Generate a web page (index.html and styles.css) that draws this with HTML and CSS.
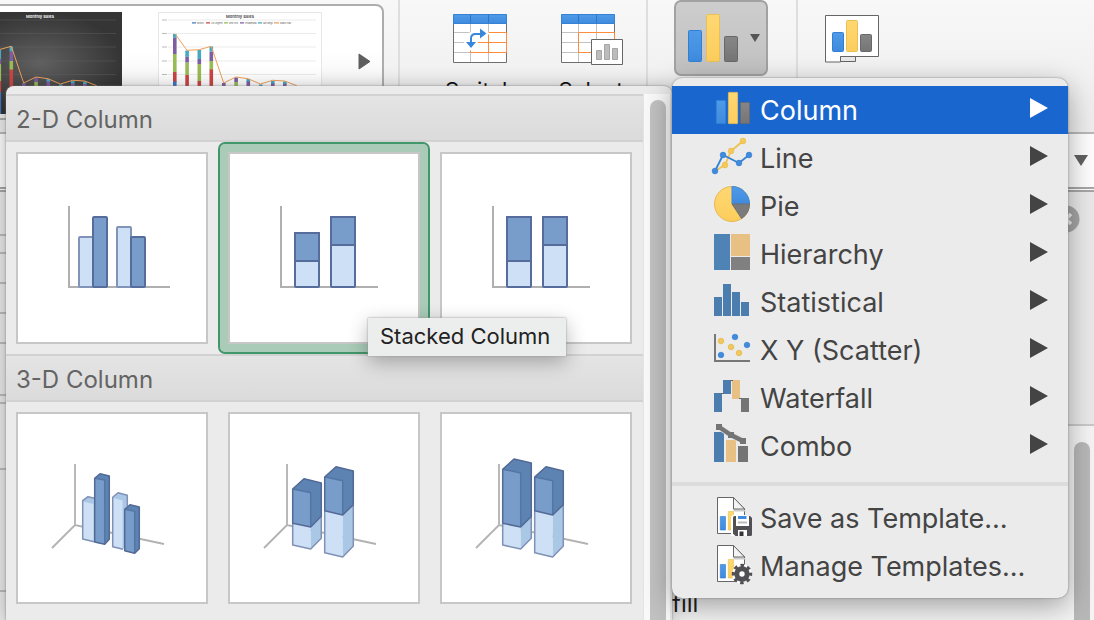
FILE: index.html
```html
<!DOCTYPE html>
<html lang="en">
<head>
<meta charset="utf-8">
<title>Change Chart Type</title>
<link rel="stylesheet" href="styles.css">
</head>
<body>
<svg class="defs" aria-hidden="true">
  <defs>
    <linearGradient id="blue" x1="0" y1="0" x2="0" y2="1"><stop offset="0" stop-color="#4f9be8"/><stop offset="1" stop-color="#3f8ade"/></linearGradient>
    <linearGradient id="gold" x1="0" y1="0" x2="0" y2="1"><stop offset="0" stop-color="#ffd772"/><stop offset="1" stop-color="#fccd5c"/></linearGradient>
    <linearGradient id="gray" x1="0" y1="0" x2="0" y2="1"><stop offset="0" stop-color="#868686"/><stop offset="1" stop-color="#757575"/></linearGradient>
    <radialGradient id="night"><stop offset="0" stop-color="#606060"/><stop offset="1" stop-color="#353535"/></radialGradient>
    <g id="plot">
      <g fill="#3f78c4"><path d="M15 69h3.600v33h-3.600zM27.300 85h3.600v17h-3.600zM39.500 80h3.600v22h-3.600zM51.500 82h3.600v20h-3.600z"/></g>
      <g fill="#cb4444"><path d="M15 60h3.600v9.500h-3.600zM27.300 63h3.600v22h-3.600zM39.500 69h3.600v11h-3.600zM51.500 57h3.600v25h-3.600z"/></g>
      <g fill="#98bb55"><path d="M15 42h3.600v18h-3.600zM27.300 50.500h3.600V63h-3.600zM39.500 52h3.600v17h-3.600zM51.500 49h3.600v8.500h-3.600zM76.300 70h3.600v10h-3.600z"/></g>
      <g fill="#7d5ea3"><path d="M15 25.500h3.600V42h-3.600zM27.300 44.500h3.600v6h-3.600zM39.500 47h3.600v5h-3.600zM51.500 39.500h3.600V49h-3.600zM64 71h3.600v9h-3.600zM76.300 65.500h3.600V70h-3.600zM88.500 69h3.600v9h-3.600zM113 71h3.600v5h-3.600zM125 71h3.600v5h-3.600z"/></g>
      <g fill="#45a9c6"><path d="M15 22h3.600v3.700h-3.600zM27.300 38.500h3.600v6.200h-3.600zM39.500 38h3.600v9h-3.600zM51.500 34.500h3.600v5h-3.600zM88.500 67h3.600v2.500h-3.600zM101 72.500h3.600v3h-3.600zM113 69h3.600v2.500h-3.600zM125 69.500h3.600V72h-3.600z"/></g>
      <path d="M17 21.700 29 38.300l12-.6 12.300-3.400L65.700 71 78 65l12 1.700 12.300 5.300 12.400-3.700 12 .7 12 4.700" fill="none" stroke="#f0a05a"/>
    </g>
    <g id="axis3d" fill="none" stroke="#b2b2b2" stroke-width="1.800"><path d="M59 52v61M36 136l23-23 89 19"/></g>
    <g id="tower-short">
      <path class="pale" d="M64.700 111.300v21.700l18 4V115z"/><path class="sky" d="M82.700 115v22l10.600-10.700v-22z"/>
      <path class="edge-soft" d="M64.700 111.300V133l18 4 10.600-10.700v-22"/>
      <path class="mid" d="M64.700 77v34.300l18 3.700V80.700z"/><path class="deep" d="M64.700 77 76 66.700 93.300 71v33.300L82.700 115V80.700z"/>
      <path class="ridge" d="m65 77 17.700 3.700V115"/><path class="edge" d="M64.700 77 76 66.700 93.300 71v33.300L82.700 115l-18-3.700z"/>
    </g>
    <g id="tower-tall">
      <path class="pale" d="M64.700 111.300v21.700l18 4V115z"/><path class="sky" d="M82.700 115v22l10.600-10.700v-22z"/>
      <path class="edge-soft" d="M64.700 111.300V133l18 4 10.600-10.700v-22"/>
      <path class="mid" d="M64.700 57.300v54l18 3.700V61z"/><path class="deep" d="M64.700 57.300 76 47l17.300 4v54L82.700 115V61z"/>
      <path class="ridge" d="M65 57.300 82.700 61v54"/><path class="edge" d="M64.700 57.300 76 47l17.300 4v53.500L82.700 115l-18-3.700z"/>
    </g>
    <g id="tower-back">
      <path class="pale" d="M96.700 98.700v42l18 4.300v-42z"/><path class="sky" d="M114.700 103v42l10.600-11V92.700z"/>
      <path class="edge-soft" d="M96.700 98.700v42l18 4.300 10.600-11V92.700"/>
      <path class="mid" d="M96.700 65v33.700l18 4.300V68.700z"/><path class="deep" d="M96.700 65 108 54.700l17.300 4.300v33.700L114.700 103V68.700z"/>
      <path class="ridge" d="m97 65 17.700 3.700V103"/><path class="edge" d="M96.700 65 108 54.700l17.300 4.300v33.700L114.700 103l-18-4.300z"/>
    </g>
    <g id="template-page">
      <path d="M5.500-.5h16L32.500 11v24.500h-27z" fill="#fff" stroke="#666"/>
      <path d="M21.500 11v2.500h12V12z" fill="#ccc"/>
      <path d="M21.500-.5V11h11z" fill="#f4f4f4" stroke="#666"/>
      <path d="M8.300 18.500h5.200V32H8.300z" fill="url(#blue)" stroke="#2e78cc" stroke-width=".6"/>
      <path d="M16.300 13.500h5.200V32h-5.200z" fill="url(#gold)" stroke="#e8bd4e" stroke-width=".6"/>
    </g>
  </defs>
</svg>

<div class="app">
  <header class="ribbon">
    <div class="gallery">
      <svg class="thumb" viewBox="0 0 164 102" role="img" aria-label="Dark chart style">
        <path d="M0 0h164v102H0z" fill="url(#night)"/>
        <path d="M10 8h148M10 21.500h148M10 35h148M10 49h148M10 62.500h148" stroke="#666" stroke-width=".4"/>
        <use href="#plot"/>
        <text x="82" y="6" class="chart-title light">Monthly Sales</text>
      </svg>
      <svg class="thumb" viewBox="0 0 164 102" role="img" aria-label="Light chart style">
        <path d="M.5.500h163v101H.5z" fill="#fff" stroke="#e6e6e6"/>
        <path d="M10 8h148M10 21.500h148M10 35h148M10 49h148M10 62.500h148" stroke="#ddd" stroke-width=".6"/>
        <path d="M4 8h5M4 21.500h5M4 35h5M4 49h5M4 62.500h5" stroke="#bbb"/>
        <use href="#plot"/>
        <g stroke-width="1.300"><path d="M34 10.800h4" stroke="#3f78c4"/><path d="M48 10.800h4" stroke="#cb4444"/><path d="M66 10.800h4" stroke="#98bb55"/><path d="M82 10.800h4" stroke="#7d5ea3"/><path d="M100 10.800h4" stroke="#45a9c6"/><path d="M116 10.800h5" stroke="#f0a05a"/></g>
        <g class="legend"><text x="39" y="11.500">Boston</text><text x="53" y="11.500">Los Angeles</text><text x="71" y="11.500">New York</text><text x="87" y="11.500">Philadelphia</text><text x="105" y="11.500">San Diego</text><text x="122" y="11.500">Grand Total</text></g>
        <text x="82" y="6" class="chart-title">Monthly Sales</text>
      </svg>
      <button class="gallery-next" aria-label="More styles"><svg viewBox="0 0 13 17" width="13" height="17"><path d="M1 1v15l11-7.500z" fill="#5e5e5e" stroke="#5e5e5e" stroke-linejoin="round"/></svg></button>
    </div>
    <div class="group data-group">
      <button class="tool">
        <svg viewBox="0 0 64 52" width="64" height="52">
          <path d="M5.500 9.500h53v39h-53z" fill="#fff" stroke="#707070"/>
          <path d="M22.500 10v38M40.500 10v38M6 18.500h52M6 28.500h52M6 38.500h52" stroke="#c2c2c2"/>
          <path d="M40.500 18.500h18v20h-36v-10h36M40.500 18.500v20" fill="none" stroke="#ff8c3c"/>
          <path d="M5.500.5h53v9h-53z" fill="url(#blue)" stroke="#3482d4"/><path d="M22.500 1v8M40.500 1v8" stroke="#2b76c7"/>
          <path d="M23 30v-5.500q0-4.500 4.500-4.500H33" fill="none" stroke="#fff" stroke-width="7"/><path d="m30 12 12 7.500L30 27zM15 27h16l-8 10z" fill="#fff"/>
          <path d="M23 29v-4.500q0-4.500 4.500-4.500H33" fill="none" stroke="#3987dc" stroke-width="2"/><path d="m32 14.500 6.500 5-6.500 5zM18 28h10l-5 6z" fill="#3987dc"/>
        </svg>
        <span>Switch</span>
      </button>
      <button class="tool">
        <svg viewBox="0 0 64 52" width="64" height="52">
          <path d="M2.500 9.500h53v39h-53z" fill="#fff" stroke="#707070"/>
          <path d="M19.500 10v38M37.500 10v38M3 18.500h52M3 28.500h52M3 38.500h52" stroke="#c2c2c2"/>
          <path d="M19.500 18.500h36v20h-36z" fill="none" stroke="#ff8c3c"/>
          <path d="M2.500.5h53v9h-53z" fill="url(#blue)" stroke="#3482d4"/><path d="M19.500 1v8M37.500 1v8" stroke="#2b76c7"/>
          <path d="M32.500 25.500h31v25h-31z" fill="#fff" stroke="#666"/><path d="M37.500 36.500h5v9h-5zM45.500 30.500h5v15h-5zM53.500 34.500h5v11h-5z" fill="#bcbcbc" stroke="#a6a6a6"/>
        </svg>
        <span>Select</span>
      </button>
    </div>
    <div class="group type-group">
      <button class="tool-pressed" aria-label="Change Chart Type" aria-expanded="true">
        <svg viewBox="0 0 50 50" width="50" height="50">
          <rect x=".5" y="17.500" width="13" height="31" rx="1" fill="url(#blue)" stroke="#3280d4"/>
          <rect x="18.500" y="1.500" width="13" height="47" rx="1" fill="url(#gold)" stroke="#e9c057"/>
          <rect x="36.500" y="23.500" width="13" height="25" rx="1" fill="url(#gray)" stroke="#686868"/>
        </svg>
        <svg viewBox="0 0 10 9" width="10" height="9"><path d="M0 0h10L5 8z" fill="#555"/></svg>
      </button>
    </div>
    <div class="group move-group">
      <button class="tool" aria-label="Move Chart">
        <svg viewBox="0 0 54 48" width="54" height="48">
          <path d="M.5.500h53v41h-38v5.500H.5z" fill="#fff" stroke="#666"/><path d="M15.500 41.500h15v5h-15z" fill="#e8e8e8" stroke="#666"/>
          <rect x="7.500" y="17.500" width="11" height="19" rx="1" fill="url(#blue)" stroke="#3280d4"/>
          <rect x="21.500" y="5.500" width="11" height="31" rx="1" fill="url(#gold)" stroke="#e9c057"/>
          <rect x="35.500" y="19.500" width="11" height="17" rx="1" fill="url(#gray)" stroke="#686868"/>
        </svg>
      </button>
    </div>
  </header>
  <div class="formula-bar"><button aria-label="Expand formula bar"><svg viewBox="0 0 14 12" width="14" height="12"><path d="M0 0h14L7 11z" fill="#606060"/></svg></button></div>
  <main class="workspace">
    <div class="rows"><i class="row tall"></i><i class="row slim"></i><i class="row"></i><i class="row"></i><i class="row"></i><i class="row big"></i><i class="row thin"></i><i class="row huge"></i><i class="row giant"></i></div>
    <aside class="pane">
      <div class="pane-head"><button aria-label="Close pane"><svg viewBox="0 0 28 28" width="28" height="28"><circle cx="14" cy="14" r="13.500" fill="#a5a5a5"/><path d="m9 9 10 10M19 9 9 19" stroke="#eee" stroke-width="3.500"/></svg></button></div>
      <div class="pane-body"><span class="pane-label">fill</span><i class="pane-thumb"></i></div>
    </aside>
  </main>
</div>

<section class="submenu" aria-label="Column charts">
  <div class="submenu-content">
    <h2>2-D Column</h2>
    <div class="tiles">
      <button class="tile" aria-label="Clustered Column"><svg viewBox="2 2 188 188">
        <path class="axis" d="M53 54v81h101"/>
        <g class="bar-soft"><rect class="pale" x="63" y="85" width="14" height="50" rx="1"/><rect class="pale" x="101" y="75" width="14" height="60" rx="1"/></g>
        <g class="bar"><rect class="mid" x="77" y="65" width="14" height="70" rx="1"/><rect class="mid" x="115" y="85" width="14" height="50" rx="1"/></g></svg></button>
      <button class="tile selected" aria-label="Stacked Column"><svg viewBox="2 2 188 188">
        <path class="axis" d="M53 54v81h97"/>
        <g class="bar"><rect class="pale" x="67" y="81" width="24" height="54" rx="1"/><path class="mid" d="M67 81h24v28H67z"/><rect class="pale" x="103" y="65" width="24" height="70" rx="1"/><path class="mid" d="M103 65h24v28h-24z"/></g></svg></button>
      <button class="tile" aria-label="100% Stacked Column"><svg viewBox="2 2 188 188">
        <path class="axis" d="M53 54v81h97"/>
        <g class="bar"><rect class="pale" x="67" y="65" width="24" height="70" rx="1"/><path class="mid" d="M67 65h24v44H67z"/><rect class="pale" x="103" y="65" width="24" height="70" rx="1"/><path class="mid" d="M103 65h24v28h-24z"/></g></svg></button>
    </div>
    <h2>3-D Column</h2>
    <div class="tiles">
      <button class="tile" aria-label="3-D Clustered Column"><svg viewBox="2 2 188 188">
        <use href="#axis3d"/>
        <path class="sky" d="M66.700 88.700 72 84.700l8.700 2v43l-3.400 0-10.600-2.700z"/><path class="pale" d="m67 89.500 10.500 2.500v37.700L67 127z"/><path class="edge-soft" d="M78 129.800 66.700 127V88.700l5.300-4 8.700 2"/>
        <path class="deep" d="M78.700 66.300 84 61.700l9.300 2.300v63.300l-4.600 5-10-2.300z"/><path class="mid" d="m78.700 66.300 10 1.700v64.300l-10-2.300z"/><path class="ridge" d="m79 66.300 9.700 1.700v64"/><path class="edge" d="M78.700 66.300 84 61.700l9.300 2.300v63.300l-4.600 5-10-2.300z"/>
        <path class="sky" d="m96.700 85.300 5.300-4.600 9.300 2.600v50l-4.600 4-10-2.600z"/><path class="pale" d="m97 86 9.500 2.500v48L97 134.700z"/><path class="edge-soft" d="M107 137.300 96.700 134.700V85.300l5.300-4.600 9.300 2.600V94"/>
        <path class="deep" d="m108.700 97.300 5.300-4.600 9.300 2.300v41.700l-4.600 4.600-10-2.600z"/><path class="mid" d="m108.700 97.300 10 2v42l-10-2.600z"/><path class="ridge" d="m109 97.300 9.700 2v42"/><path class="edge" d="m108.700 97.300 5.300-4.600 9.300 2.300v41.700l-4.600 4.600-10-2.600z"/></svg></button>
      <button class="tile" aria-label="3-D Stacked Column"><svg viewBox="2 2 188 188"><use href="#axis3d"/><use href="#tower-short"/><use href="#tower-back"/></svg></button>
      <button class="tile" aria-label="3-D 100% Stacked Column"><svg viewBox="2 2 188 188"><use href="#axis3d"/><use href="#tower-tall" x="-2"/><use href="#tower-back" x="-2"/></svg></button>
    </div>
  </div>
  <div class="track"><i class="scroll-thumb"></i></div>
</section>

<div class="tooltip" role="tooltip">Stacked Column</div>

<nav class="menu" aria-label="Chart types">
  <button class="item active"><svg class="icon" viewBox="0 0 40 40"><g stroke-width=".8"><rect x="4.400" y="10.400" width="9.200" height="23.200" rx=".5" fill="url(#blue)" stroke="#3482d4"/><rect x="16.400" y="2.400" width="9.200" height="31.200" rx=".5" fill="url(#gold)" stroke="#e9c057"/><rect x="28.400" y="12.400" width="9.200" height="21.200" rx=".5" fill="url(#gray)" stroke="#686868"/></g></svg><span>Column</span><i class="arrow"></i></button>
  <button class="item"><svg class="icon" viewBox="0 0 40 40"><path d="m3 33 10-6 6-14L31 3" fill="none" stroke="#f2c14e" stroke-width="1.800"/><g fill="#f5c957" stroke="#e2b444" stroke-width=".5"><circle cx="13" cy="27" r="2.900"/><circle cx="19" cy="13" r="2.900"/><circle cx="31" cy="3" r="2.900"/></g><path d="m3 33 8-16 16 8 10-8" fill="none" stroke="#3482d4" stroke-width="1.800"/><g fill="#3f8cde" stroke="#2e78cc" stroke-width=".5"><circle cx="3" cy="33" r="2.900"/><circle cx="11" cy="17" r="2.900"/><circle cx="27" cy="25" r="2.900"/><circle cx="37" cy="17" r="2.900"/></g></svg><span>Line</span><i class="arrow"></i></button>
  <button class="item"><svg class="icon" viewBox="0 0 40 40"><circle cx="20" cy="18" r="17.500" fill="url(#gold)" stroke="#e5b94e"/><path d="M20 18V.5A17.500 17.500 0 0 1 37.500 18z" fill="url(#blue)" stroke="#3b89df"/><path d="M20 18h17.500a17.500 17.500 0 0 1-8 14.500z" fill="#7b7b7b" stroke="#707070"/></svg><span>Pie</span><i class="arrow"></i></button>
  <button class="item"><svg class="icon" viewBox="0 0 40 40"><path d="M2 0h16v36H2z" fill="#4f82b5"/><path d="M19 0h19v22H19z" fill="#e9c084"/><path d="M19 23h19v13H19z" fill="#808080"/></svg><span>Hierarchy</span><i class="arrow"></i></button>
  <button class="item"><svg class="icon" viewBox="0 0 40 40"><path d="M2 15h8v19H2zM11 2h8v32h-8zM20 10h8v24h-8zM29 20h8v14h-8z" fill="#4b7daf"/></svg><span>Statistical</span><i class="arrow"></i></button>
  <button class="item"><svg class="icon" viewBox="0 0 40 40"><path d="M3 4v27h35" fill="none" stroke="#777" stroke-width="2"/><g fill="#f3c75a" stroke="#deb044" stroke-width=".6"><circle cx="9" cy="11" r="2.800"/><circle cx="19" cy="17" r="2.800"/><circle cx="27" cy="23" r="2.800"/></g><g fill="#3f8cde" stroke="#2e78cc" stroke-width=".6"><circle cx="23" cy="7" r="2.800"/><circle cx="35" cy="15" r="2.800"/><circle cx="9" cy="25" r="2.800"/></g></svg><span>X Y (Scatter)</span><i class="arrow"></i></button>
  <button class="item"><svg class="icon" viewBox="0 0 40 40"><path d="M2 15h8v19H2zM11 2h8v14h-8z" fill="#4b7daf"/><path d="M20 2h8v19h-8z" fill="#e9c084"/><path d="M29 20h8v14h-8z" fill="#757575"/><path d="M9 15.500h3M18 2.500h3M27 20.500h3" stroke="#666"/></svg><span>Waterfall</span><i class="arrow"></i></button>
  <button class="item"><svg class="icon" viewBox="0 0 40 40"><path d="M2 6h10v30H2z" fill="#4b7daf"/><path d="M14 14h10v22H14z" fill="#e9c084"/><path d="M26 20h10v16H26z" fill="#747474"/><path d="m7 1 12 8 12 6" fill="none" stroke="#e0e0e0" stroke-width="6"/><path d="m7 1 12 8 12 6" fill="none" stroke="#747474" stroke-width="4.500"/><path d="M4-2h6v6H4zM16 6h6v6h-6zM28 12h6v6h-6z" fill="#747474"/></svg><span>Combo</span><i class="arrow"></i></button>
  <hr>
  <button class="item"><svg class="icon" viewBox="0 0 40 40"><use href="#template-page"/><path d="M19 20q0-3 3-3h13v21H19z" fill="#fff"/><path d="M22.500 18H38l2 2v16.500q0 1.500-1.500 1.500H23.500L21 35.500V19.500q0-1.500 1.500-1.500z" fill="#515155"/><path d="M24 18h13v10H24z" fill="#fff"/><path d="M26 18h8.500v3H26z" fill="#3f8cde"/><path d="M26 24.500h9" stroke="#bbb" stroke-width="2"/><path d="M26 32h9v6h-9z" fill="#fff"/><path d="M27.500 33.500h4V38h-4z" fill="#333"/></svg><span>Save as Template…</span></button>
  <button class="item"><svg class="icon" viewBox="0 0 40 40"><use href="#template-page"/><circle cx="30" cy="28" r="10" fill="#fff"/><path d="M32 27h9v10h-9z" fill="#ebebeb"/><circle cx="30" cy="28" r="2.700" fill="#fff"/><circle cx="30" cy="28" r="5.200" fill="none" stroke="#515155" stroke-width="5"/><circle cx="30" cy="28" r="8.400" fill="none" stroke="#515155" stroke-width="3.600" stroke-dasharray="3.400 3.197" stroke-dashoffset="1.700"/></svg><span>Manage Templates…</span></button>
</nav>
</body>
</html>
```
FILE: styles.css
```css
* { box-sizing: border-box; }

body {
  position: relative;
  margin: 0;
  min-height: 100vh;
  overflow: hidden;
  font-family: Inter, "Liberation Sans", sans-serif;
  background: #e6e6e6;
}

button {
  margin: 0;
  padding: 0;
  border: 0;
  background: none;
  font: inherit;
  color: inherit;
}

svg { display: block; flex: none; overflow: visible; }
i { display: block; }
.defs { position: absolute; width: 0; height: 0; }

/* Application behind the menus */
.app { display: flex; flex-direction: column; height: 100vh; }

.ribbon {
  display: flex;
  flex: none;
  height: 134px;
  background: linear-gradient(#f8f8f8, #ececec);
  border-bottom: 2px solid #b8b8b8;
}

.gallery {
  display: flex;
  align-items: flex-start;
  gap: 36px;
  width: 384px;
  height: 116px;
  margin-top: 4px;
  padding-top: 6px;
  overflow: hidden;
  border: 2px solid #adadad;
  border-left: 0;
  border-radius: 0 8px 8px 0;
  background: linear-gradient(#fff 40%, #ededed);
}

.thumb { width: 164px; height: 102px; overflow: hidden; }
.thumb:first-child { margin-left: -42px; }
.gallery-next { margin-top: 41px; }

.chart-title { font-size: 4px; font-weight: 700; text-anchor: middle; fill: #555; }
.chart-title.light { fill: #eee; }
.legend { font-size: 2px; fill: #555; }

.group { display: flex; align-items: flex-start; height: 100%; border-left: 2px solid #dedede; }
.data-group { gap: 47px; width: 248px; margin-left: 14px; padding: 14px 0 0 48px; }
.type-group { padding: 0 28px 0 26px; }
.move-group { padding: 15px 0 0 27px; }

.tool { display: flex; flex-direction: column; align-items: center; gap: 11px; width: 64px; font-size: 22px; line-height: 26px; color: #111; }
.move-group .tool { width: 54px; }

.tool-pressed {
  display: flex;
  align-items: center;
  gap: 12px;
  width: 94px;
  height: 76px;
  padding-left: 12px;
  border: 2px solid #a2a2a2;
  border-radius: 7px;
  background: linear-gradient(#cdcdcd, #c1c1c1);
}

.formula-bar {
  display: flex;
  flex: none;
  align-items: center;
  justify-content: flex-end;
  height: 58px;
  padding-right: 6px;
  border-bottom: 5px double #a6a6a6;
  background: #fdfdfd;
}

.workspace { display: flex; flex: 1; min-height: 0; justify-content: space-between; }
.rows { flex: 1; overflow: hidden; background: #eaeaea; }
.row { height: 30px; border-bottom: 2px solid #bcbcbc; }
.row.tall { height: 44px; }
.row.slim { height: 18px; }
.row.big { height: 52px; }
.row.thin { height: 8px; }
.row.huge { height: 66px; }
.row.giant { height: 122px; }

.pane { display: flex; flex-direction: column; width: 422px; background: #e9e9e9; }
.pane-head { display: flex; flex: none; justify-content: flex-end; align-items: flex-start; height: 234px; padding: 13px 14px 0 0; border-bottom: 2px solid #c8c8c8; }
.pane-body { display: flex; flex: 1; align-items: flex-end; justify-content: space-between; padding: 16px 4px 0 0; background: #f4f4f4; }
.pane-label { padding-bottom: 2px; font-size: 24px; line-height: 28px; color: #222; }
.pane-thumb { align-self: stretch; width: 16px; border-radius: 8px 8px 0 0; background: #b8b8b8; }

/* Chart gallery submenu */
.submenu {
  position: absolute;
  top: 86px;
  bottom: 0;
  left: 6px;
  display: flex;
  width: 666px;
  padding-top: 8px;
  overflow: hidden;
  border-radius: 8px 8px 0 0;
  background: #ebebeb;
  box-shadow: 0 0 2px #777, 0 2px 20px rgb(0 0 0 / 30%);
}

.submenu-content { flex: 1; }

.submenu h2 {
  height: 48px;
  margin: 0;
  padding-left: 10px;
  border: 2px solid #d2d2d2;
  border-width: 2px 0;
  background: linear-gradient(#e4e4e4, #dbdbdb);
  font-size: 24px;
  font-weight: 400;
  line-height: 48px;
  color: #646464;
}

.tiles { display: flex; gap: 20px; padding: 10px; }
.tile { position: relative; flex: none; width: 192px; height: 192px; border: 2px solid #c7c7c7; background: #fff; }
.tile svg { width: 188px; height: 188px; }

/* Rounded highlight ring around the hovered tile */
.tile.selected::before,
.tile.selected::after { content: ""; position: absolute; pointer-events: none; }
.tile.selected::before { inset: -10px; border: 8px solid #a9cbb8; }
.tile.selected::after { inset: -12px; border: 2px solid #41966a; border-radius: 7px; }
.tile.selected::before { border-radius: 5px; }

.pale { fill: #cde0f5; }
.sky { fill: #aac8e5; }
.mid { fill: #799dca; }
.deep { fill: #5c83b2; }
.axis { fill: none; stroke: #b0b0b0; stroke-width: 2; }
.bar { stroke: #566d9b; stroke-width: 2; }
.bar-soft { stroke: #8193b7; stroke-width: 2; }
.edge { fill: none; stroke: #536996; stroke-width: 1.5; stroke-linejoin: round; }
.edge-soft { fill: none; stroke: #7f91b5; stroke-width: 1.5; stroke-linejoin: round; }
.ridge { fill: none; stroke: #5476a7; stroke-width: 1.5; }

.track { flex: none; width: 29px; padding: 6px 6px 0; border: 2px solid #e4e4e4; border-width: 0 2px 0 1px; background: #f9f9f9; }
.scroll-thumb { width: 16px; height: 100%; border-radius: 8px 8px 0 0; background: #c1c1c1; }

.tooltip {
  position: absolute;
  top: 318px;
  left: 368px;
  padding: 4px 16px 6px 12px;
  background: #eceeed;
  box-shadow: 0 0 2px #999, 0 6px 20px rgb(0 0 0 / 30%);
  font-size: 22px;
  line-height: 28px;
  color: #222;
}

/* Chart type menu */
.menu {
  position: absolute;
  top: 78px;
  left: 672px;
  width: 396px;
  padding: 8px 0;
  border-radius: 10px;
  background: #ebebeb;
  box-shadow: 0 0 2px #777, 0 8px 28px rgb(0 0 0 / 35%);
}

.item {
  display: flex;
  align-items: center;
  width: 100%;
  height: 48px;
  padding: 0 20px 0 40px;
  font-size: 27px;
  line-height: 46px;
  text-align: left;
  color: #444;
}

.item span { flex: 1; padding: 2px 0 0 8px; white-space: nowrap; }
.icon { width: 40px; height: 40px; }
.item.active { background: #1a66cf; color: #fff; }

.arrow {
  margin-bottom: 4px;
  border-left: 18px solid #444;
  border-top: 10px solid transparent;
  border-bottom: 10px solid transparent;
}

.item.active .arrow { border-left-color: #fff; }
.menu hr { height: 4px; margin: 12px 0 8px; border: 0; background: #dcdcdc; }
```
